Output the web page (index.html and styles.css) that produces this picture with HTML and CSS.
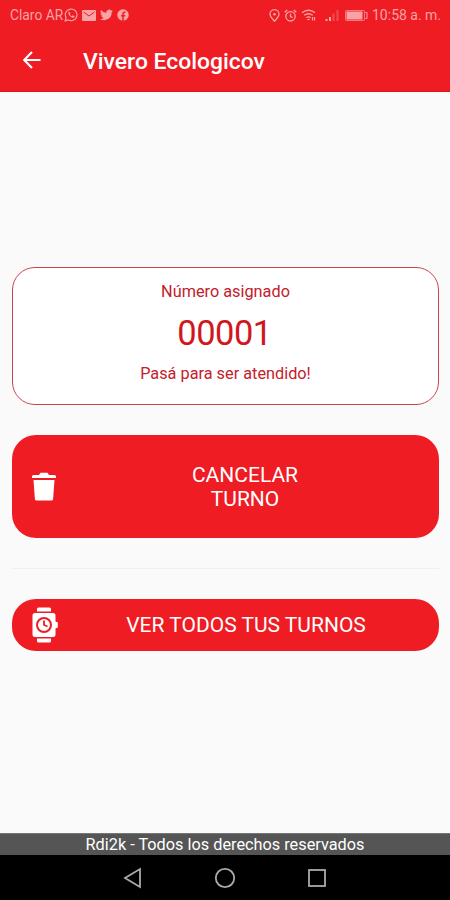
FILE: index.html
```
<!DOCTYPE html>
<html lang="es">
<head>
  <meta charset="UTF-8">
  <meta name="viewport" content="width=device-width, initial-scale=1">
  <title>Vivero Ecologicov</title>
  <link rel="stylesheet" href="styles.css">
</head>
<body>
  <header>
    <div class="status">
      <div class="status-left">
        <span class="carrier">Claro AR</span>
        <svg width="14" height="14" viewBox="0 0 24 24">
          <path d="M2 22l1.500-5.500A10 10 0 1 1 7.500 20.500z" fill="none" stroke="currentColor" stroke-width="2"/>
          <path d="M7.500 7.500c-1 3 4 9 8.500 9 1.500 0 2-1.500 2-2.500l-3-1.500-1.500 1.500c-1.500-.5-3-2-3.500-3.500L11 9.500 9.500 6.500z" fill="currentColor"/>
        </svg>
        <svg class="mail" width="14" height="11" viewBox="0 0 14 11">
          <rect width="14" height="11" rx="1" fill="currentColor"/>
          <path d="M1.500 2L7 6l5.500-4" fill="none" stroke="#ef1c24" stroke-width="1"/>
        </svg>
        <svg class="bird" width="13" height="12" viewBox="0 0 24 22">
          <path d="M24 3.300c-.9.400-1.800.7-2.800.8 1-.6 1.800-1.600 2.200-2.700-1 .6-2 1-3.100 1.200A4.900 4.900 0 0 0 11.900 7C7.800 6.800 4.200 4.900 1.700 1.900c-1.300 2.200-.7 5.100 1.500 6.500-.8 0-1.600-.2-2.200-.6 0 2.300 1.600 4.400 3.900 4.900-.7.200-1.500.2-2.200.1.600 2 2.400 3.400 4.600 3.400A9.900 9.900 0 0 1 0 18.300 14 14 0 0 0 21.500 5.800c1-.7 1.800-1.500 2.500-2.500z" fill="currentColor"/>
        </svg>
        <svg class="face" width="12" height="12" viewBox="0 0 24 24">
          <circle cx="12" cy="12" r="11.500" fill="currentColor"/>
          <path d="M12 24V9.500Q12 6.500 15 6.500h2M8 13.500h8.500" fill="none" stroke="#ef1c24" stroke-width="3"/>
        </svg>
      </div>
      <div class="status-right">
        <svg width="11" height="13" viewBox="0 0 11 13">
          <path d="M5.500 12.200C3 9.500 1 7.500 1 5.200a4.500 4.500 0 0 1 9 0c0 2.300-2 4.300-4.500 7z" fill="none" stroke="currentColor" stroke-width="1.300"/>
          <circle cx="5.500" cy="5.200" r="1.300" fill="currentColor"/>
        </svg>
        <svg class="alarm" width="13" height="13" viewBox="0 0 13 13">
          <circle cx="6.500" cy="7.300" r="4.700" fill="none" stroke="currentColor" stroke-width="1.300"/>
          <path d="M.7 3.200L3.300 1M12.300 3.200L9.700 1M6.500 4.700v3l2 1" fill="none" stroke="currentColor" stroke-width="1.300"/>
        </svg>
        <svg class="wifi" width="15" height="12" viewBox="0 0 15 12">
          <path d="M1 3.800q6.500-5 13 0M3.300 6.300q4.200-3.200 8.400 0M5.400 8.700q2.100-1.600 4.200 0" fill="none" stroke="currentColor" stroke-width="1.400"/>
          <path d="M6.300 10.500h2.400M11.500 8v3.500M13.500 8v3.500" stroke="currentColor" stroke-width="1.200"/>
        </svg>
        <svg class="signal" width="15" height="12" viewBox="0 0 15 12">
          <path d="M1.500 12v-2M5 12V8" stroke="currentColor" stroke-width="2"/>
          <path d="M8.500 12V4.500M12.500 12V1" stroke="currentColor" stroke-width="2" opacity=".35"/>
        </svg>
        <svg class="battery" width="23" height="11" viewBox="0 0 23 11">
          <rect x=".5" y=".5" width="19" height="10" rx="1" fill="none" stroke="currentColor" opacity=".7"/>
          <rect x="1.500" y="1.500" width="16" height="8" fill="currentColor"/>
          <path d="M20.500 2.500h1.500v6h-1.500" fill="none" stroke="currentColor"/>
        </svg>
        <span class="clock">10:58 a. m.</span>
      </div>
    </div>
    <div class="toolbar">
      <svg class="back" width="18" height="18" viewBox="0 0 18 18">
        <path d="M17.500 9H1.500M9 1L1.200 9 9 17" fill="none" stroke="currentColor" stroke-width="2.200"/>
      </svg>
      <h1>Vivero Ecologicov</h1>
    </div>
  </header>

  <main>
    <section class="turno">
      <p>Número asignado</p>
      <p class="numero">00001</p>
      <p>Pasá para ser atendido!</p>
    </section>

    <button class="btn btn-cancelar">
      <svg width="24" height="30" viewBox="0 0 24 30">
        <path d="M0 4.500q0-1.500 1.500-1.500H7l1.500-2.200h7L17 3h5.500Q24 3 24 4.500V6H0zM1.500 8h21l-1.400 19q-.1 1.600-1.700 1.600H4.600q-1.600 0-1.700-1.600z" fill="currentColor"/>
      </svg>
      <span>CANCELAR<br>TURNO</span>
    </button>

    <hr>

    <button class="btn btn-ver">
      <svg width="26" height="36" viewBox="0 0 26 36">
        <path d="M5 4.500V2q0-1.500 1.500-1.500h11Q19 .5 19 2v2.500zM5 31.500V34q0 1.500 1.500 1.500h11q1.500 0 1.500-1.500v-2.500z" fill="currentColor"/>
        <path d="M3 6h18Q23.500 6 23.500 8.500v6l2.300 1v5l-2.300 1v6q0 2.500-2.500 2.500H3Q.5 30 .5 27.500v-19Q.5 6 3 6z" fill="currentColor"/>
        <circle cx="12" cy="18" r="7" fill="none" stroke="#ef1c24" stroke-width="2"/>
        <path d="M12 13.500V18l3.500 1.500" fill="none" stroke="#ef1c24" stroke-width="1.800"/>
      </svg>
      <span>VER TODOS TUS TURNOS</span>
    </button>
  </main>

  <footer>Rdi2k - Todos los derechos reservados</footer>

  <nav>
    <svg width="20" height="22" viewBox="0 0 20 22">
      <path d="M17 2v18L2 11z" fill="none" stroke="currentColor" stroke-width="1.800"/>
    </svg>
    <svg width="22" height="22" viewBox="0 0 22 22">
      <circle cx="11" cy="11" r="9.200" fill="none" stroke="currentColor" stroke-width="1.800"/>
    </svg>
    <svg width="20" height="22" viewBox="0 0 20 22">
      <rect x="2" y="3" width="16" height="16" fill="none" stroke="currentColor" stroke-width="1.800"/>
    </svg>
  </nav>
</body>
</html>
```
FILE: styles.css
```
* {
  box-sizing: border-box;
}

body {
  margin: 0;
  height: 900px;
  display: flex;
  flex-direction: column;
  font-family: Roboto, sans-serif;
  background: #fafafa;
  overflow: hidden;
}

svg {
  display: block;
  flex-shrink: 0;
}

header {
  height: 92px;
  background: #ef1c24;
  border-bottom: 1px solid #d3161d;
  color: #fff;
}

.status {
  height: 30px;
  padding: 0 10px;
  display: flex;
  justify-content: space-between;
  align-items: center;
  color: #f9a3a5;
  font-size: 14px;
}

.status-left,
.status-right {
  display: flex;
  align-items: center;
}

.carrier {
  width: 54px;
  font-size: 13.800px;
  white-space: nowrap;
}

.mail,
.bird,
.face,
.alarm,
.wifi {
  margin-left: 4px;
}

.signal {
  margin-left: 9px;
}

.battery {
  margin-left: 5px;
}

.clock {
  margin-left: 4px;
  width: 68px;
  white-space: nowrap;
}

.toolbar {
  height: 61px;
  padding-left: 23px;
  display: flex;
  align-items: center;
}

.back {
  margin-bottom: 2px;
}

h1 {
  margin: 1px 0 0 42px;
  font-size: 22.900px;
  font-weight: 500;
}

main {
  flex: 1;
  padding: 0 11px 7px 12px;
  display: flex;
  flex-direction: column;
  justify-content: center;
}

.turno {
  height: 138px;
  margin-bottom: 30px;
  padding-top: 14px;
  border: 1.500px solid #c9444c;
  border-radius: 23px;
  background: #fff;
  text-align: center;
  color: #c4202b;
  font-size: 16.300px;
}

.turno p {
  margin: 0;
  line-height: 20px;
}

.turno .numero {
  margin: 11px 2px 10px 0;
  font-size: 34.500px;
  letter-spacing: -0.5px;
  line-height: 41px;
  color: #d2161d;
}

.btn {
  display: flex;
  align-items: center;
  padding: 0 5px 0 20px;
  border: none;
  border-radius: 24px;
  background: #ef1c24;
  color: #fff;
  font-family: inherit;
  font-size: 21px;
  line-height: 24px;
}

.btn span {
  flex: 1;
  text-align: center;
}

.btn-cancelar {
  height: 103px;
}

.btn-ver {
  height: 52px;
}

hr {
  width: 100%;
  margin: 30px 0;
  border: none;
  border-top: 1px solid #f0f0f0;
}

footer {
  height: 22px;
  background: #555;
  border-top: 1px solid #777;
  color: #fff;
  text-align: center;
  font-size: 16.300px;
  line-height: 22px;
}

nav {
  height: 45px;
  background: #000;
  color: #aaa;
  display: flex;
  justify-content: center;
  align-items: center;
  gap: 71px;
}
```
